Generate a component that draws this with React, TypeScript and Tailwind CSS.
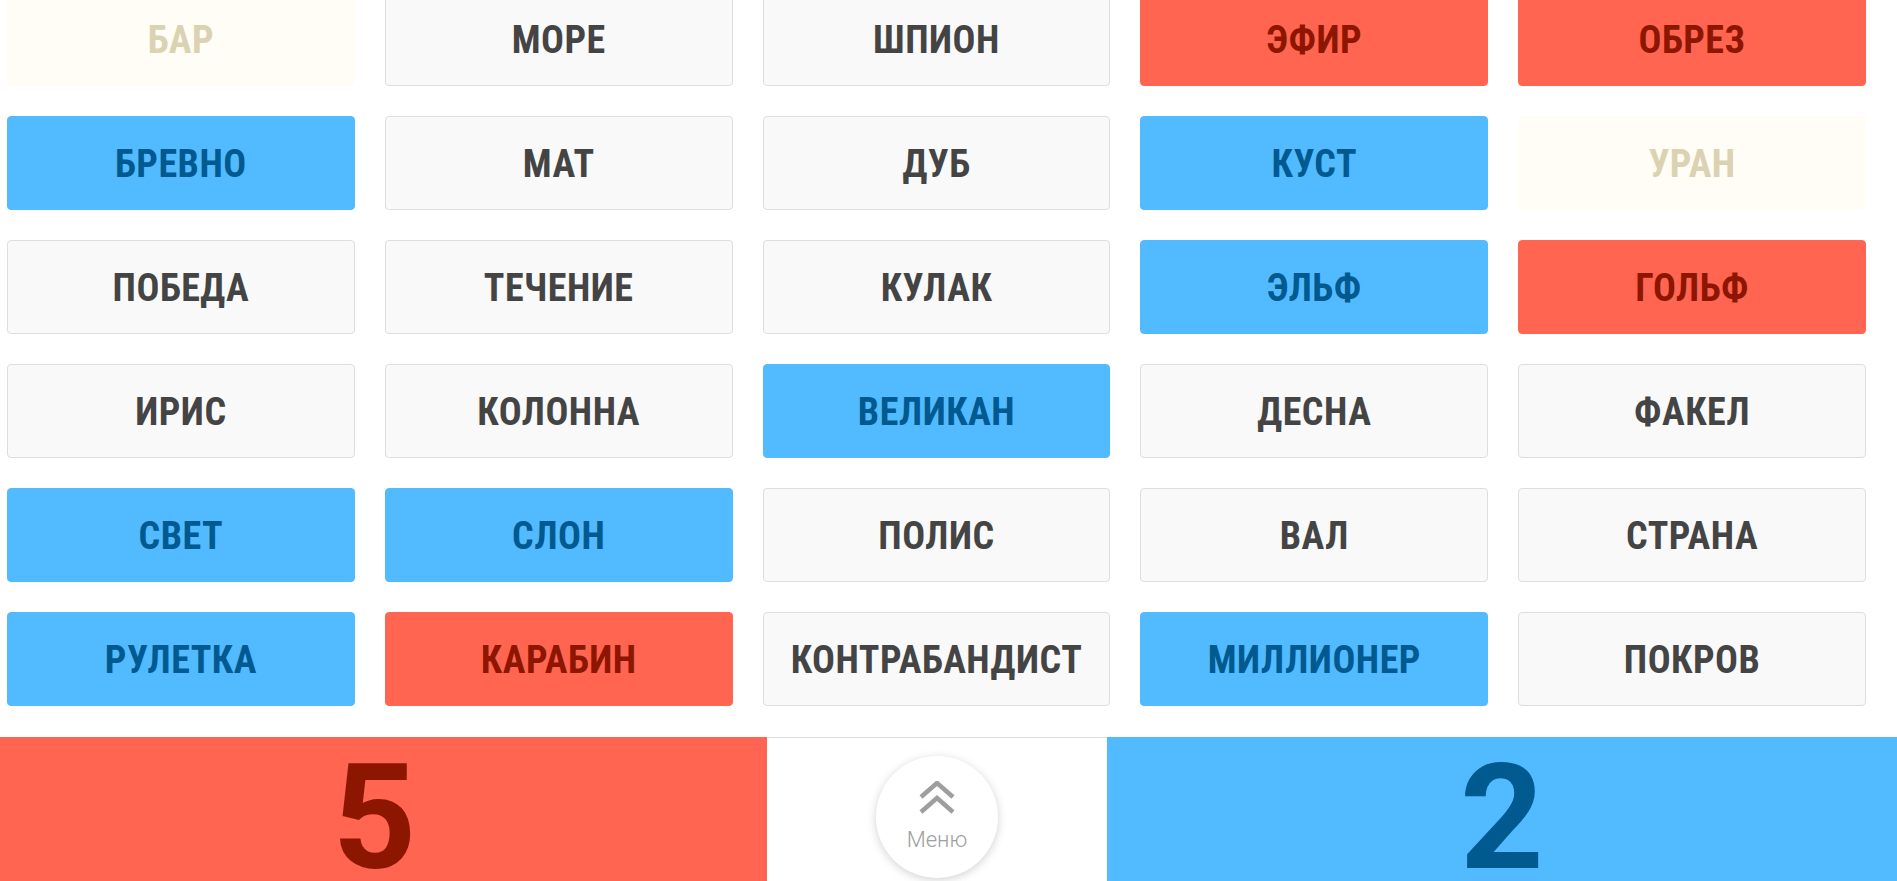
import React from 'react'

type Kind = 'red' | 'blue' | 'plain' | 'beige'

const words: [string, Kind][] = [
  ['БАР', 'beige'], ['МОРЕ', 'plain'], ['ШПИОН', 'plain'], ['ЭФИР', 'red'], ['ОБРЕЗ', 'red'],
  ['БРЕВНО', 'blue'], ['МАТ', 'plain'], ['ДУБ', 'plain'], ['КУСТ', 'blue'], ['УРАН', 'beige'],
  ['ПОБЕДА', 'plain'], ['ТЕЧЕНИЕ', 'plain'], ['КУЛАК', 'plain'], ['ЭЛЬФ', 'blue'], ['ГОЛЬФ', 'red'],
  ['ИРИС', 'plain'], ['КОЛОННА', 'plain'], ['ВЕЛИКАН', 'blue'], ['ДЕСНА', 'plain'], ['ФАКЕЛ', 'plain'],
  ['СВЕТ', 'blue'], ['СЛОН', 'blue'], ['ПОЛИС', 'plain'], ['ВАЛ', 'plain'], ['СТРАНА', 'plain'],
  ['РУЛЕТКА', 'blue'], ['КАРАБИН', 'red'], ['КОНТРАБАНДИСТ', 'plain'], ['МИЛЛИОНЕР', 'blue'], ['ПОКРОВ', 'plain'],
]

const styles: Record<Kind, string> = {
  red: 'bg-[#ff6550] border-[#ff6550] text-[#8c1600]',
  blue: 'bg-[#52baff] border-[#52baff] text-[#00598f]',
  plain: 'bg-[#f9f9f9] border-[#dedede] text-[#444444]',
  beige: 'bg-[#fffdf5] border-[#fffdf5] text-[#dbd2b2]',
}

const Card: React.FC<{ word: string; kind: Kind }> = ({ word, kind }) => (
  <div
    className={`h-[94px] flex items-center justify-center rounded-[4px] border pt-[2px] text-[38px] font-bold tracking-[0.5px] ${styles[kind]}`}
    style={{ fontFamily: '"Roboto Condensed", Roboto, sans-serif', fontStretch: 'condensed' }}
  >
    {word}
  </div>
)

const App: React.FC = () => {
  return (
    <div className="h-[881px] w-full overflow-hidden bg-white" style={{ fontFamily: 'Roboto, sans-serif' }}>
      {/* word grid */}
      <div className="mt-[-8px] grid grid-cols-5 gap-x-[30px] gap-y-[30px] pl-[7px] pr-[31px]">
        {words.map(([w, k]) => (
          <Card key={w} word={w} kind={k} />
        ))}
      </div>

      {/* score bar */}
      <div className="mt-[31px] flex h-[144px]">
        <div className="flex w-[767px] justify-center bg-[#ff6550] pr-[18px]">
          <span className="mt-[9px] text-[146px] leading-none font-bold text-[#8c1600]">5</span>
        </div>
        <div className="flex w-[340px] justify-center border-t border-[#dddddd] bg-white">
          <button className="mt-[18px] flex h-[122px] w-[122px] flex-col items-center rounded-full bg-white shadow-[0_2px_10px_rgba(0,0,0,0.18)]">
            <svg className="mt-[25px]" width="36" height="34" viewBox="0 0 36 34" fill="none" stroke="#9e9e9e" strokeWidth="4.5">
              <path d="M2 16 L18 2 L34 16" />
              <path d="M2 31 L18 17 L34 31" />
            </svg>
            <span className="mt-[8px] text-[22px] font-light text-[#9e9e9e]">Меню</span>
          </button>
        </div>
        <div className="flex flex-1 justify-center bg-[#52baff]">
          <span className="mt-[9px] text-[146px] leading-none font-bold text-[#00598f]">2</span>
        </div>
      </div>
    </div>
  )
}

export default App
